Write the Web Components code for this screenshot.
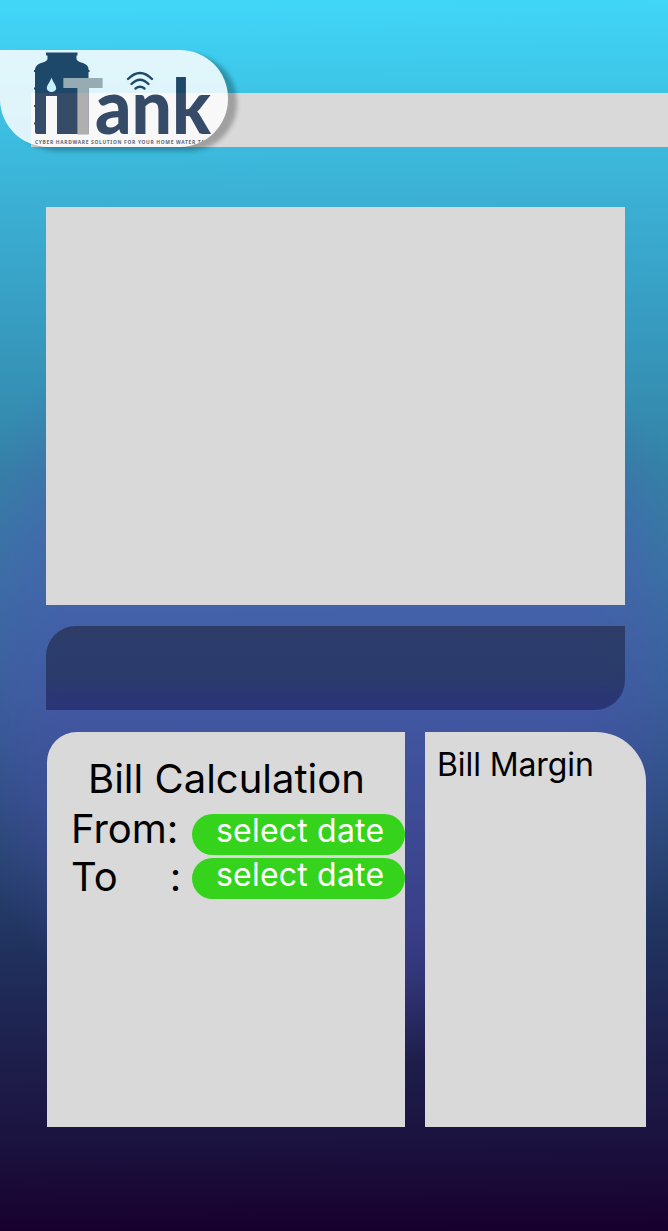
<!DOCTYPE html>
<html lang="en">
<head>
<meta charset="utf-8">
<title>iTank</title>
<style>
  html, body { margin: 0; }
  body { font-family: Inter, "Liberation Sans", sans-serif; font-weight: 400; color: #000; }
</style>
</head>
<body>
<itank-screen>
  <itank-header slot="header"><itank-logo></itank-logo></itank-header>
  <itank-panel kind="main"></itank-panel>
  <itank-panel kind="strip"></itank-panel>
  <itank-row>
    <bill-card kind="calc">
      <span slot="title">Bill Calculation</span>
      <date-row><span slot="label">From:</span>select date</date-row>
      <date-row class="to"><span slot="label">To</span><span slot="colon">:</span>select date</date-row>
    </bill-card>
    <bill-card kind="margin"><span slot="title">Bill Margin</span></bill-card>
  </itank-row>
</itank-screen>
<script>
const define = (name, html) => customElements.define(name, class extends HTMLElement {
  constructor() {
    super();
    this.attachShadow({ mode: 'open' }).innerHTML = html;
  }
});

define('itank-screen', `
<style>
  :host {
    display: flex; flex-direction: column; box-sizing: border-box;
    width: 668px; height: 1231px; overflow: hidden;
    background:
      radial-gradient(ellipse 405px 405px at 328px 668px,
        rgba(90,74,188,.42) 0%, rgba(90,74,188,.42) 66%, rgba(90,74,188,.33) 78%, rgba(90,74,188,.12) 91%, rgba(90,74,188,0) 100%),
      linear-gradient(179.500deg, #41d6f8 3px, #3dc5e7 93px, #3bb0d4 203px, #389fc4 303px, #358fb3 403px,
        #3383a6 473px, #33789f 580px, #2f6490 700px, #26426e 870px, #202f5c 960px, #1e1e4b 1060px, #1b1340 1140px, #18002e 1232px);
  }
  main { display: flex; flex-direction: column; padding: 60px 22px 0 46px; }
</style>
<slot name="header"></slot>
<main><slot></slot></main>`);

define('itank-header', `
<style>
  :host { display: grid; grid-template: 50px 43px 54px / 31px 1fr; }
  .bar { grid-area: 3 / 2; background: #d9d9d9; }
  .brand { grid-area: 2 / 1 / 4 / 3; z-index: 1; }
</style>
<div class="bar"></div><div class="brand"><slot></slot></div>`);

define('itank-logo', `
<style>
  :host { display: block; width: 228px; height: 97px; background: #fff; opacity: .84;
    border-radius: 0 48px 48px 48px; box-shadow: 9px 4px 4px rgba(0,0,0,.31); }
  .clip { width: 228px; height: 97px; overflow: hidden; border-radius: 0 48px 48px 48px; }
  svg { display: block; }
</style>
<div class="clip">
<svg width="228" height="97" viewBox="0 50 228 97" role="img" aria-label="iTank">
  <path fill="#173052" d="M46 52.500H77.500V55.500H76.500V59Q77 61.500 83 63Q88.500 65 88.500 69V134H37Q35 134 35 132V69Q36 64.500 41 63Q47 61.500 47.500 59V55.500H46Z"/>
  <path stroke="#173052" stroke-width="2" d="M34 71h2M34 88.500h2M34 106h2M34 123.500h2M87 71h2.500"/>
  <path fill="#fff" d="M46 96h11v38H46z"/>
  <path fill="#dff9ff" d="M51.500 77.500C53 82.500 56.200 85 56.200 88.500A4.800 4.300 0 0 1 46.800 88.500C46.800 85 50 82.500 51.500 77.500Z"/>
  <text x="62" y="134" fill="#a8a8a8" font-family="Noto Sans" font-weight="700" font-size="78.500" textLength="42" lengthAdjust="spacingAndGlyphs">T</text>
  <text x="95" y="134" fill="#173052" font-family="Lato" font-weight="900" font-size="77" textLength="116" lengthAdjust="spacingAndGlyphs">ank</text>
  <g fill="none" stroke="#173052" stroke-width="2.400" stroke-linecap="round">
    <path d="M128 79Q140 67 152 79M131.500 84Q140 75.500 148.500 84M135.500 88.500Q140 85 144.500 88.500"/>
  </g>
  <text x="35" y="144" fill="#173052" opacity=".85" font-family="Noto Sans" font-weight="700" font-size="4.900" textLength="178" lengthAdjust="spacing">CYBER HARDWARE SOLUTION FOR YOUR HOME WATER TANK</text>
</svg>
</div>`);

define('itank-panel', `
<style>
  :host { display: block; width: 579px; }
  :host([kind=main]) { height: 398px; background: #d9d9d9; }
  :host([kind=strip]) { height: 84px; margin-top: 21px; border-radius: 30px 0 30px 0;
    background: linear-gradient(rgba(36,34,58,.6), rgba(28,38,68,.6) 20%, rgba(28,38,70,.6) 60%, rgba(28,30,88,.6) 85%, rgba(28,30,88,.6)); }
</style>`);

define('itank-row', `
<style>:host { display: flex; gap: 20px; margin: 22px 0 0 1px; }</style><slot></slot>`);

define('bill-card', `
<style>
  :host { display: block; box-sizing: border-box; height: 395px; background: #d9d9d9; white-space: nowrap; }
  :host([kind=calc]) { width: 358px; border-radius: 30px 0 0 0; padding-top: 23px; }
  :host([kind=margin]) { width: 221px; border-radius: 0 50px 0 0; padding: 13px 0 0 12px; }
  .title { font-size: 32px; line-height: 40px; letter-spacing: -.1px; }
  :host([kind=calc]) .title { font-size: 40px; line-height: 48px; padding-left: 41px; margin-bottom: 11px; letter-spacing: 0; }
</style>
<div class="title"><slot name="title"></slot></div><slot></slot>`);

define('date-row', `
<style>
  :host { display: grid; grid-template-columns: 121px 213px; padding-left: 24px; height: 44px; }
  .label { display: flex; font-size: 40px; line-height: 48px; margin-top: -9px; }
  :host(.to) .label { margin-top: -5px; }
  .colon { margin-left: 52px; }
  .pick { height: 41px; box-sizing: border-box; border-radius: 21px; background: #35d31b; color: #fff;
    font-size: 32px; line-height: 34px; padding-left: 24px; letter-spacing: .2px; }
</style>
<div class="label"><slot name="label"></slot><span class="colon"><slot name="colon"></slot></span></div>
<div class="pick"><slot></slot></div>`);
</script>
</body>
</html>
